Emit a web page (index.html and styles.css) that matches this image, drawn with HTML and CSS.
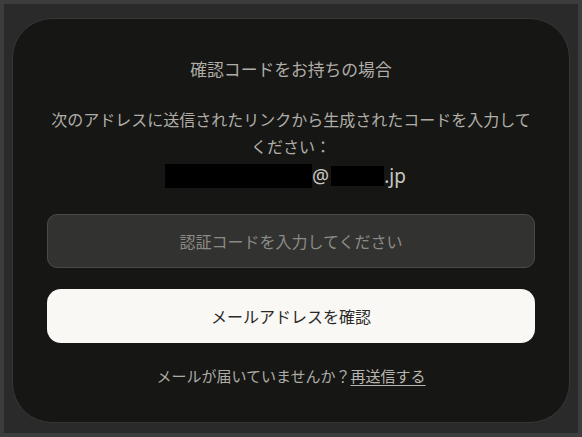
FILE: index.html
```html
<!DOCTYPE html>
<html lang="ja">
<head>
<meta charset="utf-8">
<link rel="stylesheet" href="styles.css">
</head>
<body>
<div class="frame">
  <div class="card">
    <h1 class="title">確認コードをお持ちの場合</h1>
    <p class="desc">次のアドレスに送信されたリンクから生成されたコードを入力してください：</p>
    <div class="email"><span class="mask mask-a"></span><span class="at">@</span><span class="mask mask-b"></span><span class="tld">.jp</span></div>
    <div class="input">認証コードを入力してください</div>
    <button class="btn">メールアドレスを確認</button>
    <p class="foot">メールが届いていませんか？<a class="link">再送信する</a></p>
  </div>
</div>
</body>
</html>
```
FILE: styles.css
```css
html, body {
  margin: 0;
  padding: 0;
  height: 100%;
}
body {
  background: #3d3d3d;
  padding: 4px;
  box-sizing: border-box;
  font-family: "Noto Sans CJK JP", "Noto Sans", sans-serif;
}
.frame {
  background: #2a2a2a;
  height: 100%;
  box-sizing: border-box;
  padding: 14px 8px 10px 8px;
}
.card {
  background: #161615;
  border: 1px solid #363634;
  border-radius: 40px;
  height: 100%;
  box-sizing: border-box;
  padding: 38px 34px 0 34px;
  display: flex;
  flex-direction: column;
  align-items: stretch;
  text-align: center;
}
.title {
  margin: 0;
  font-size: 16.8px;
  font-weight: 400;
  line-height: 24px;
  color: #b0aea7;
}
.desc {
  margin: 25px 0 0 0;
  font-size: 16px;
  line-height: 27px;
  color: #b0aea7;
}
.email {
  height: 32px;
  display: flex;
  justify-content: center;
  align-items: center;
  padding-right: 11px;
  font-family: "Noto Sans", sans-serif;
  font-size: 19px;
  color: #c9c7c0;
}
.mask {
  display: inline-block;
  background: #000;
}
.mask-a { width: 147px; height: 24px; }
.mask-b { width: 53px; height: 20px; margin-left: 2px; }
.at, .tld { line-height: 24px; }
.input {
  margin-top: 22px;
  height: 54px;
  box-sizing: border-box;
  border: 1px solid #4a4a47;
  border-radius: 10px;
  background: #323230;
  display: flex;
  align-items: center;
  justify-content: center;
  font-size: 16px;
  color: #8d8b85;
}
.btn {
  margin-top: 21px;
  height: 54px;
  border: none;
  border-radius: 14px;
  background: #f9f8f4;
  font-family: inherit;
  font-size: 16px;
  color: #2a2a28;
  padding: 0;
}
.foot {
  margin: 22px 0 0 0;
  font-size: 15px;
  line-height: 22px;
  color: #aeaca5;
}
.link {
  color: #b8b6af;
  text-decoration: underline;
  text-underline-offset: 3px;
}
```
